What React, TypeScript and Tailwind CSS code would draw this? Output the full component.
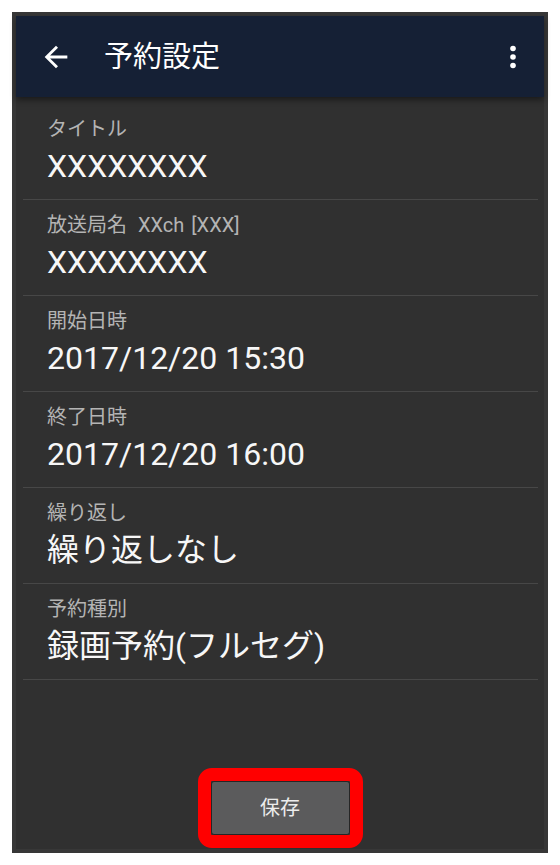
import React from "react";

const rows = [
  { label: "タイトル", value: "XXXXXXXX" },
  { label: "放送局名 XXch [XXX]", value: "XXXXXXXX" },
  { label: "開始日時", value: "2017/12/20 15:30" },
  { label: "終了日時", value: "2017/12/20 16:00" },
  { label: "繰り返し", value: "繰り返しなし" },
  { label: "予約種別", value: "録画予約(フルセグ)" },
];

export default function App() {
  return (
    <div
      className="w-[560px] h-[865px] bg-white pt-[12px] pl-[12px]"
      style={{ fontFamily: 'Roboto, "Noto Sans CJK JP", sans-serif' }}
    >
      <div className="w-[536px] h-[841px] border-4 border-[#373737] bg-[#303030] flex flex-col">
        <div className="relative z-10 h-[81px] bg-[#152035] flex items-center pl-[23px] pr-[19px] shadow-[0_3px_6px_rgba(0,0,0,0.45)]">
          <svg width="34" height="34" viewBox="0 0 24 24" fill="#ffffff">
            <path d="M20 11H7.83l5.59-5.59L12 4l-8 8 8 8 1.41-1.41L7.83 13H20v-2z" />
          </svg>
          <div className="ml-[31px] text-[29px] leading-[36px] text-white">予約設定</div>
          <div className="flex-1" />
          <svg width="24" height="24" viewBox="0 0 24 24" fill="#ffffff">
            <circle cx="12" cy="3.5" r="2.8" />
            <circle cx="12" cy="12" r="2.8" />
            <circle cx="12" cy="20.5" r="2.8" />
          </svg>
        </div>
        <div className="flex-1 flex flex-col pt-[7px] pl-[7px] pr-[6px]">
          {rows.map((r) => (
            <div key={r.label} className="h-[96px] border-b border-[#474747] pl-[24px] pt-[13px]">
              <div className="text-[20px] leading-[24px] text-[#b4b4b4]">
                {r.label.startsWith("放送局名") ? (
                  <>
                    放送局名<span className="ml-[11px]">XXch</span>
                    <span className="ml-[7px]">[XXX]</span>
                  </>
                ) : (
                  r.label
                )}
              </div>
              <div className="mt-[7px] text-[32px] leading-[36px] text-[#f7f7f7]">{r.value}</div>
            </div>
          ))}
          <div className="flex-1" />
          <div className="flex justify-center mb-[1px]">
            <div className="w-[165px] h-[80px] border-[13px] border-[#ff0000] rounded-[14px] -ml-[1px]">
              <div className="w-full h-full bg-[#5b5b5c] border border-[#262626] rounded-[3px] flex items-center justify-center text-[20px] text-[#ececec]">
                保存
              </div>
            </div>
          </div>
        </div>
      </div>
    </div>
  );
}
